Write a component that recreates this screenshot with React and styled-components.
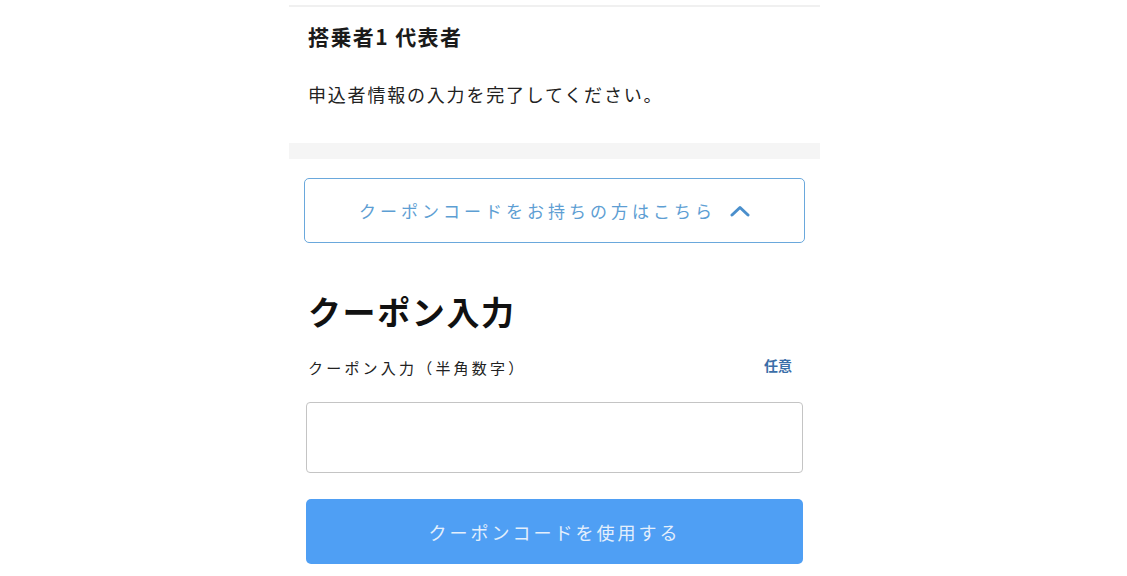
import styled, { createGlobalStyle } from 'styled-components'

const GlobalStyle = createGlobalStyle`
  html, body {
    margin: 0;
    padding: 0;
    background: #fff;
  }
  body {
    font-family: "Noto Sans CJK JP", "Noto Sans", sans-serif;
    color: #1a1a1a;
  }
`

const Page = styled.div`
  width: 531px;
  margin-left: 289px;
`

const Card = styled.section`
  margin-top: 5px;
  border-top: 2px solid #f0f0f0;
  padding: 13px 19px 0;
  height: 138px;
  box-sizing: border-box;
`

const PassengerTitle = styled.h2`
  margin: 0;
  font-size: 21px;
  line-height: 32px;
  font-weight: 700;
  letter-spacing: 1.4px;
`

const Notice = styled.p`
  margin: 29px 0 0;
  font-size: 18px;
  line-height: 26px;
  letter-spacing: 1.8px;
  color: #222;
`

const Divider = styled.div`
  height: 16px;
  background: #f5f5f5;
`

const Body = styled.div`
  padding: 19px 17px 0;
`

const Toggle = styled.button`
  display: flex;
  align-items: center;
  justify-content: center;
  gap: 14px;
  width: calc(100% + 4px);
  margin-left: -2px;
  height: 65px;
  border: 1.5px solid #6aa8dc;
  border-radius: 5px;
  background: #fff;
  color: #5d9ed3;
  font-family: inherit;
  font-size: 17px;
  letter-spacing: 4px;
  cursor: pointer;
`

const Heading = styled.h1`
  margin: 44px 0 0 2px;
  font-size: 33px;
  line-height: 48px;
  font-weight: 700;
  letter-spacing: 1.6px;
  color: #111;
`

const LabelRow = styled.div`
  display: flex;
  justify-content: space-between;
  align-items: center;
  margin: 22px 11px 0 2px;
`

const Label = styled.label`
  font-size: 15px;
  letter-spacing: 3.2px;
  color: #222;
`

const Optional = styled.span`
  font-size: 14px;
  font-weight: 700;
  color: #3b6ea8;
  margin-top: -6px;
`

const Input = styled.input`
  display: block;
  box-sizing: border-box;
  width: 100%;
  height: 71px;
  margin-top: 24px;
  border: 1.5px solid #c4c4c4;
  border-radius: 4px;
  font-size: 18px;
  padding: 0 12px;
`

const Submit = styled.button`
  display: block;
  width: 100%;
  height: 65px;
  margin-top: 26px;
  border: none;
  border-radius: 5px;
  background: #4f9ff4;
  color: #e4effc;
  font-family: inherit;
  font-size: 18px;
  letter-spacing: 3px;
`

const ChevronUp = () => (
  <svg width="20" height="12" viewBox="0 0 20 12" fill="none">
    <path d="M2 10 L10 2.5 L18 10" stroke="#4a8fcc" strokeWidth="3" strokeLinecap="round" strokeLinejoin="round" />
  </svg>
)

const App = () => (
  <>
    <GlobalStyle />
    <Page>
      <Card>
        <PassengerTitle>搭乗者1 代表者</PassengerTitle>
        <Notice>申込者情報の入力を完了してください。</Notice>
      </Card>
      <Divider />
      <Body>
        <Toggle type="button">
          <span>クーポンコードをお持ちの方はこちら</span>
          <ChevronUp />
        </Toggle>
        <Heading>クーポン入力</Heading>
        <LabelRow>
          <Label htmlFor="coupon">クーポン入力（半角数字）</Label>
          <Optional>任意</Optional>
        </LabelRow>
        <Input id="coupon" type="text" />
        <Submit type="button">クーポンコードを使用する</Submit>
      </Body>
    </Page>
  </>
)

export default App
